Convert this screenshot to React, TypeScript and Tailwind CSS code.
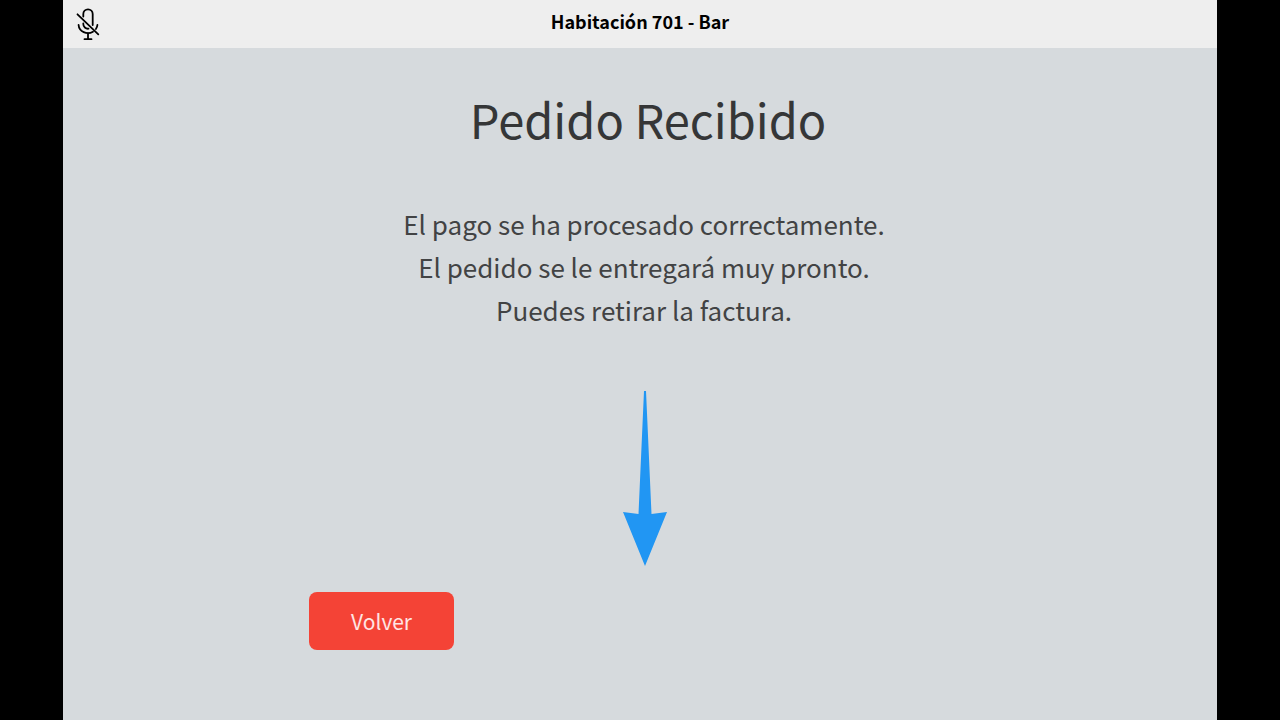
export default function App() {
  return (
    <div className="flex min-h-screen justify-center bg-black px-[63px] font-['Noto_Sans_CJK_SC','Noto_Sans',sans-serif]">
      <div className="flex w-full flex-col bg-[#d6dadd]">
        <header className="grid h-12 grid-cols-[1fr_auto_1fr] items-start bg-[#eeeeee] px-3 pt-2">
          <button type="button" aria-label="Micrófono desactivado" className="flex size-8 items-center justify-self-start">
            <svg viewBox="0 0 26 34" className="h-[34px] w-[26px]" fill="none" stroke="#000" strokeWidth="1.8" strokeLinecap="round">
              <path d="M8.300 9.500V7a4.700 4.700 0 0 1 9.400 0v11M8.300 16.500v.5a4.700 4.700 0 0 0 5.200 4.700" />
              <path d="M3.600 18a9.400 8.500 0 0 0 14.400 6.700M22.400 18a9.400 8.500 0 0 1-1.500 4" />
              <path d="M13 26.500v5.700M9.500 32.200h7M2.500 7.300l20.800 20" />
            </svg>
          </button>
          <p className="text-[18px] leading-[26px] font-bold text-black">Habitación 701 - Bar</p>
        </header>
        <main className="flex flex-col items-center text-[#424344]">
          <h1 className="mt-8 pl-4 text-[47px] leading-[78px] text-[#353637]">Pedido Recibido</h1>
          <div className="mt-11 pl-2 text-center text-[26px] leading-[43px]">
            <p>El pago se ha procesado correctamente.</p>
            <p>El pedido se le entregará muy pronto.</p>
            <p>Puedes retirar la factura.</p>
          </div>
          <svg viewBox="0 0 44 175" className="mt-15 ml-2.5 h-[175px] w-11" fill="#2196f3" aria-hidden="true">
            <path d="M21 0h2L28.500 123l15.500-2-22 54L0 121l15.500 2z" />
          </svg>
          <div className="mt-[26px] w-[662px] max-w-full">
            <button type="button" className="h-[58px] w-[145px] rounded-lg bg-[#f44336] text-[21px] leading-8 text-[#ffe5e3]">Volver</button>
          </div>
        </main>
      </div>
    </div>
  );
}
